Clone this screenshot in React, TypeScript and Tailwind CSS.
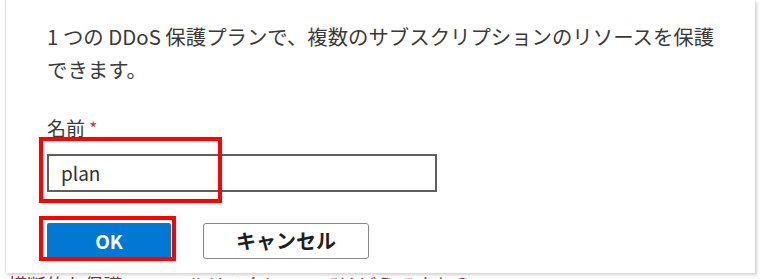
export default function App() {
  return (
    <div className="relative h-[279px] w-[760px] overflow-hidden bg-white font-['Noto_Sans_CJK_JP',sans-serif]">
      {/* dialog panel */}
      <div className="relative z-10 ml-[5px] h-[273px] w-[750px] border-l border-[#e1dfdd] bg-white pl-[41px] pt-[20px] shadow-[2px_2px_3px_rgba(0,0,0,0.18)]">
        <p className="text-[20.4px] leading-[33px] text-[#3b3a39]">
          1 つの DDoS 保護プランで、複数のサブスクリプションのリソースを保護
          <br />
          できます。
        </p>

        <label className="mt-[27px] block text-[19px] leading-[30px] text-[#3b3a39]">
          名前 <span className="align-top text-[17px] text-[#c4314b]">*</span>
        </label>

        <div className="mt-[11px] flex h-[38px] w-[390px] items-center border-2 border-[#605e5c] px-[12px] text-[19px] text-[#323130]">
          plan
        </div>

        <div className="mt-[31px] flex gap-[32px]">
          <button
            type="button"
            className="flex h-[36px] w-[124px] items-center justify-center rounded-[2px] bg-[#0078d4] text-[19px] font-bold text-white"
          >
            OK
          </button>
          <button
            type="button"
            className="flex h-[36px] w-[166px] items-center justify-center rounded-[3px] border border-[#8a8886] bg-white text-[20px] font-bold text-[#201f1e]"
          >
            キャンセル
          </button>
        </div>
      </div>

      {/* text behind the dialog, mostly cut off */}
      <div className="-mt-[3px] whitespace-nowrap pl-[8px] text-[19px] leading-[30px] text-[#a4262c]">
        横断的な保護 － ロールリスクについてはどうですか？
      </div>

      {/* annotation boxes */}
      <div className="absolute left-[39px] top-[137px] z-20 h-[66px] w-[183px] border-[4px] border-[#ff0000]" />
      <div className="absolute left-[39px] top-[216px] z-20 h-[45px] w-[137px] border-[4px] border-[#ff0000]" />
    </div>
  )
}
